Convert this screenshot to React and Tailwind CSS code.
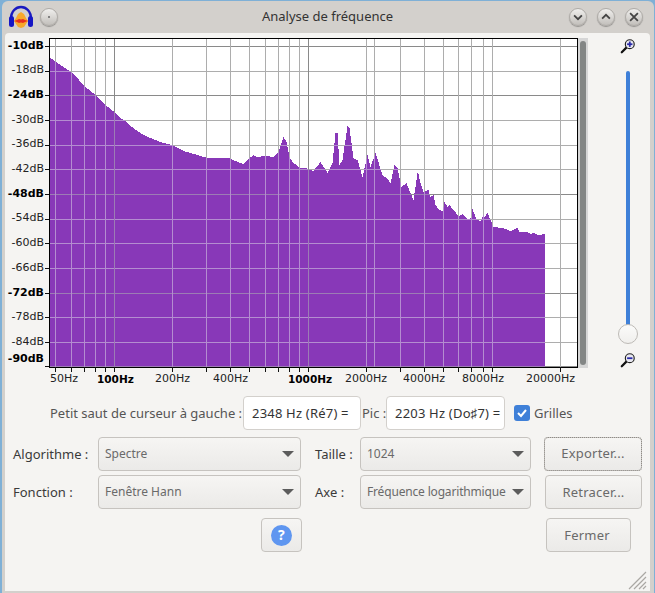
const dbLabels = ["-10dB", "-18dB", "-24dB", "-30dB", "-36dB", "-42dB", "-48dB", "-54dB", "-60dB", "-66dB", "-72dB", "-78dB", "-84dB", "-90dB"];
const boldDb = ["-10dB", "-24dB", "-48dB", "-72dB", "-90dB"];
const freqLines = [55, 71, 84, 95, 105, 172, 206, 230, 249, 265, 278, 289, 299, 366, 374, 400, 424, 443, 458, 471, 483, 492, 560];
const curve = [[49, 57], [57, 63], [72, 73], [85, 87], [95, 95], [105, 105], [115, 113], [120, 118], [125, 121], [130, 126], [140, 133], [150, 138], [160, 142], [172, 145], [183, 151], [197, 155], [207, 158], [220, 158], [228, 158], [235, 161], [243, 164], [248, 159], [253, 155], [257, 157], [263, 156], [267, 156], [273, 157], [278, 152], [283, 137], [286, 142], [289, 157], [293, 163], [300, 168], [305, 168], [313, 171], [320, 162], [327, 173], [332, 163], [335, 133], [337, 133], [339, 165], [342, 160], [347, 126], [349, 128], [353, 158], [357, 160], [362, 177], [367, 155], [370, 167], [375, 153], [382, 175], [387, 179], [390, 183], [394, 165], [397, 168], [401, 187], [406, 183], [410, 193], [413, 200], [417, 173], [418, 174], [420, 183], [423, 192], [428, 190], [430, 197], [433, 195], [435, 205], [438, 209], [442, 211], [444, 202], [447, 207], [449, 205], [453, 210], [458, 216], [462, 214], [467, 219], [471, 218], [472, 209], [476, 219], [480, 221], [483, 215], [484, 217], [487, 213], [490, 220], [493, 227], [502, 228], [505, 229], [510, 231], [517, 228], [519, 232], [527, 232], [530, 234], [533, 233], [538, 235], [544, 234]];

// stepped outline, one bar per pixel like the plot itself
function buildSpectrum() {
  const pts = [];
  for (let i = 0; i < curve.length - 1; i++) {
    const [x0, y0] = curve[i];
    const [x1, y1] = curve[i + 1];
    for (let x = x0; x < x1; x++) {
      const r = Math.round(y0 + ((y1 - y0) * (x - x0)) / (x1 - x0));
      pts.push(`${x},${r} ${x + 1},${r}`);
    }
  }
  return pts.join(" ") + " 545,234 545,367 50,367";
}
const spectrum = buildSpectrum();

function Chart() {
  const ys = dbLabels.map((d, i) => ({ d, y: Math.round(46 + i * 24.65) + 0.5 }));
  return (
    <svg width="655" height="390" viewBox="0 0 655 390" className="absolute left-0 top-0">
      <defs>
        <clipPath id="spec">
          <polygon points={spectrum} />
        </clipPath>
      </defs>
      <rect x="49.5" y="38.5" width="528" height="329" fill="#fff" />
      <polygon points={spectrum} fill="#8838b8" shapeRendering="crispEdges" />
      {ys.map(({ d, y }) => (
        <line key={d} x1="49" x2="577" y1={y} y2={y} stroke={boldDb.includes(d) ? "#8a8a8a" : "#adadad"} />
      ))}
      {freqLines.map((x) => (
        <line key={x} x1={x + 0.5} x2={x + 0.5} y1="38" y2="367" stroke="#adadad" />
      ))}
      <line x1="114.5" x2="114.5" y1="38" y2="367" stroke="#8a8a8a" />
      <line x1="308.5" x2="308.5" y1="38" y2="367" stroke="#8a8a8a" />
      <g clipPath="url(#spec)">
        {ys.map(({ d, y }) => (
          <line key={d} x1="49" x2="577" y1={y} y2={y} stroke={boldDb.includes(d) ? "#9c7cb4" : "#b48cd0"} />
        ))}
        {freqLines.map((x) => (
          <line key={x} x1={x + 0.5} x2={x + 0.5} y1="38" y2="367" stroke="#b48cd0" />
        ))}
        <line x1="114.5" x2="114.5" y1="38" y2="367" stroke="#9c7cb4" />
        <line x1="308.5" x2="308.5" y1="38" y2="367" stroke="#9c7cb4" />
      </g>
      <rect x="49.5" y="38.5" width="528" height="329" fill="none" stroke="#000" />
      {ys.map(({ d, y }) => (
        <line key={d} x1="45" x2="49" y1={y} y2={y} stroke="#111" />
      ))}
      {[...freqLines.filter((x) => x !== 374), 114, 308].map((x) => (
        <line key={x} x1={x + 0.5} y1="367" x2={x + 0.5} y2="372" stroke="#111" />
      ))}
    </svg>
  );
}

function TitleButton({ children }) {
  return (
    <div className="flex h-[18px] w-[18px] items-center justify-center rounded-full border border-[#aeaba7] bg-gradient-to-b from-[#f0efed] to-[#c2bfbb] shadow-[0_1px_1px_rgba(0,0,0,0.3)]">
      {children}
    </div>
  );
}

function Select({ text, className }) {
  return (
    <div className={`flex h-[34px] items-center justify-between rounded border border-[#c6c3bf] bg-gradient-to-b from-[#f6f5f3] to-[#ebeae8] pl-1.5 pr-[6px] text-xs text-[#6a6a6a] ${className}`}>
      <span className="whitespace-nowrap">{text}</span>
      <span className="h-0 w-0 border-x-[6px] border-t-[6px] border-x-transparent border-t-[#5c5c5c]" />
    </div>
  );
}

function Btn({ children, className }) {
  return (
    <div className={`flex h-[34px] items-center justify-center rounded border border-[#c6c3bf] bg-gradient-to-b from-[#f6f5f3] to-[#ebeae8] text-[13px] tracking-[0.2px] text-[#6a6a6a] ${className}`}>
      {children}
    </div>
  );
}

function Magnifier({ minus }) {
  return (
    <svg width="16" height="16" viewBox="0 0 18 18">
      <line x1="2" y1="16" x2="8" y2="10" stroke="#111" strokeWidth="2.5" strokeLinecap="round" />
      <circle cx="11" cy="7" r="5" fill="#e8e8f0" stroke="#222" strokeWidth="1.3" />
      <rect x="8" y="6" width="6" height="2" fill="#2a2aa8" />
      {!minus && <rect x="10" y="4" width="2" height="6" fill="#2a2aa8" />}
    </svg>
  );
}

export default function App() {
  return (
    <div className="relative h-[593px] w-[655px] overflow-hidden bg-[#7fb0d6] font-['Noto_Sans',sans-serif] text-[13px] text-[#3a3a3a]">
      <div className="ml-[2px] mr-px mt-px h-[592px] rounded-t-md bg-[#d3d0cc]">
        <div className="relative flex h-[32px] items-center justify-between pl-[6px] pr-[11px]">
          <div className="flex items-center gap-[6px]">
            <svg width="26" height="26" viewBox="0 0 26 26">
              <path d="M3 15 C3 -1 23 -1 23 15" fill="none" stroke="#1a1ac0" strokeWidth="2.5" />
              <rect x="1" y="12" width="5" height="11" rx="2.5" fill="#1616c4" />
              <rect x="20" y="12" width="5" height="11" rx="2.5" fill="#1616c4" />
              <path d="M6 17 L8 14 L10 10 L13 8 L16 10 L18 14 L20 17 L18 20 L16 23 L13 24 L10 23 L8 20 Z" fill="#f7a82a" />
              <path d="M6 17 L9 16 L11 15 L13 15.5 L15 15 L17 16 L20 17 L17 18 L15 19 L13 18.5 L11 19 L9 18 Z" fill="#e83020" />
            </svg>
            <TitleButton>
              <span className="h-[2px] w-[2px] rounded-full bg-[#666]" />
            </TitleButton>
          </div>
          <span className="absolute left-0 right-0 pr-px text-center text-[13px] text-[#333]">Analyse de fréquence</span>
          <div className="flex items-center gap-[10px]">
            <TitleButton>
              <svg width="10" height="10" viewBox="0 0 9 9"><path d="M1 3 L4.5 6.5 L8 3" fill="none" stroke="#444" strokeWidth="1.6" /></svg>
            </TitleButton>
            <TitleButton>
              <svg width="10" height="10" viewBox="0 0 9 9"><path d="M1 6 L4.5 2.5 L8 6" fill="none" stroke="#444" strokeWidth="1.6" /></svg>
            </TitleButton>
            <TitleButton>
              <svg width="10" height="10" viewBox="0 0 9 9"><path d="M1 1 L8 8 M8 1 L1 8" fill="none" stroke="#444" strokeWidth="1.6" /></svg>
            </TitleButton>
          </div>
        </div>
        <div className="ml-[3px] mr-[4px] h-[558px] rounded-t-sm bg-[#f5f4f2]" />
      </div>

      <Chart />
      <div className="absolute left-[578px] top-[38px] h-[330px] w-[10px] bg-[#d6d6d6]">
        <div className="ml-[2px] mt-[3px] h-[324px] w-[6px] rounded-full bg-[#838685]" />
      </div>

      <div className="absolute left-0 top-[37px] w-[44px] font-['DejaVu_Sans',sans-serif] text-[11px] text-[#222]">
        {dbLabels.map((d, i) => (
          <div key={d} className={`absolute right-0 ${boldDb.includes(d) ? "font-bold text-black" : ""}`} style={{ top: i === 13 ? 314 : 0.5 + i * 24.7 }}>
            {d}
          </div>
        ))}
      </div>
      <div className="absolute left-0 top-[371px] font-['DejaVu_Sans',sans-serif] text-[11px] text-[#222]">
        {[["50Hz", 50], ["100Hz", 97, 1], ["200Hz", 155], ["400Hz", 213], ["1000Hz", 288, 1], ["2000Hz", 345], ["4000Hz", 403], ["8000Hz", 462], ["20000Hz", 526]].map(([t, x, b]) => (
          <span key={t} className={`absolute whitespace-nowrap ${b ? "text-[10.5px] leading-[16.5px] font-bold text-black" : ""}`} style={{ left: x }}>{t}</span>
        ))}
      </div>

      <div className="absolute left-[620px] top-[38px]"><Magnifier /></div>
      <div className="absolute left-[626px] top-[71px] h-[255px] w-[4px] rounded-full bg-[#3f80d8]" />
      <div className="absolute left-[618px] top-[324px] h-[20px] w-[20px] rounded-full border border-[#bdbab6] bg-gradient-to-b from-[#fbfbfa] to-[#f0efed]" />
      <div className="absolute left-[620px] top-[352px]"><Magnifier minus /></div>

      <div className="absolute left-[50px] top-[396px] flex h-[34px] items-center whitespace-nowrap text-[#555]">
        <span className="w-[193px] pt-[2px]">Petit saut de curseur à gauche :</span>
        <div className="flex h-[34px] w-[118px] items-center rounded border border-[#d3d0cc] bg-white pl-2 pt-[2px] tracking-[0.2px] text-[#333]">2348 Hz (Ré7) =</div>
        <span className="ml-px w-[24px] pt-[2px]">Pic :</span>
        <div className="flex h-[34px] w-[119px] items-center overflow-hidden rounded border border-[#d3d0cc] bg-white pl-2 pt-[2px] tracking-[0.2px] text-[#333]">2203 Hz (Do♯7) =</div>
        <div className="ml-[9px] flex items-center gap-1">
          <span className="flex h-4 w-4 items-center justify-center rounded-[3px] bg-[#3f80d8]">
            <svg width="12" height="12" viewBox="0 0 12 12"><path d="M2 6 L5 9 L10 3" fill="none" stroke="#fff" strokeWidth="2" /></svg>
          </span>
          <span className="pt-[2px]">Grilles</span>
        </div>
      </div>

      <div className="absolute left-[13px] top-[437px] flex w-[630px] items-center">
        <span className="w-[85px] pt-[2px]">Algorithme :</span>
        <Select text="Spectre" className="w-[203px]" />
        <span className="ml-[14px] w-[45px] pt-[2px]">Taille :</span>
        <Select text="1024" className="w-[171px]" />
        <Btn className="ml-[13px] w-[98px] outline-1 -outline-offset-1 outline-dotted outline-[#8f8c88]">Exporter...</Btn>
      </div>
      <div className="absolute left-[13px] top-[475px] flex w-[630px] items-center">
        <span className="w-[85px] pt-[2px]">Fonction :</span>
        <Select text="Fenêtre Hann" className="w-[203px]" />
        <span className="ml-[14px] w-[45px] pt-[2px]">Axe :</span>
        <Select text="Fréquence logarithmique" className="w-[171px] tracking-[-0.17px]" />
        <Btn className="ml-[14px] w-[97px] pt-[2px]">Retracer...</Btn>
      </div>
      <div className="absolute left-[261px] top-[518px]">
        <Btn className="w-[41px]">
          <span className="flex h-[21px] w-[21px] items-center justify-center rounded-full bg-[#5f96f0] text-sm font-bold text-white">?</span>
        </Btn>
      </div>
      <div className="absolute left-[546px] top-[518px]">
        <Btn className="w-[85px] pr-[3px] pt-[2px]">Fermer</Btn>
      </div>

      <svg width="20" height="20" viewBox="0 0 20 20" className="absolute left-[627px] top-[570px]">
        <path d="M2 19 L19 2 M7 19 L19 7 M12 19 L19 12 M16 19 L19 16" stroke="#aaa8a4" strokeWidth="1.2" />
      </svg>
    </div>
  );
}
